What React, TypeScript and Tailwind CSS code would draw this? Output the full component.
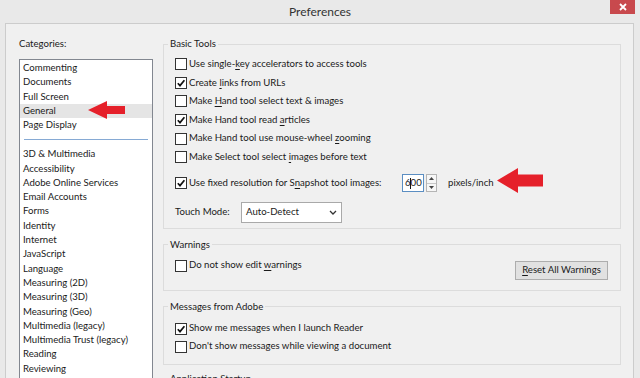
import React from "react";

const Cb = ({ checked }: { checked?: boolean }) => (
  <span className="w-[12px] h-[12px] border border-[#333333] bg-white flex items-center justify-center shrink-0">
    {checked && (
      <svg width="10" height="10" viewBox="0 0 10 10">
        <path d="M1.8 5.2 L4 7.6 L8.4 2.2" fill="none" stroke="#111" strokeWidth="1.7" />
      </svg>
    )}
  </span>
);

const U = ({ children }: { children: React.ReactNode }) => (
  <span className="underline decoration-1 underline-offset-[2px]">{children}</span>
);

const Row = ({ checked, children }: { checked?: boolean; children: React.ReactNode }) => (
  <div className="h-[18.6px] flex items-center gap-[2px]">
    <Cb checked={checked} />
    <span className="whitespace-nowrap">{children}</span>
  </div>
);

const Group = ({ title, className, children }: { title: string; className?: string; children?: React.ReactNode }) => (
  <fieldset className={"border border-[#dcdcdc] w-[458px] " + (className ?? "")}>
    <legend className="ml-[4px] px-[2px] h-[14px] leading-[14px] whitespace-nowrap">{title}</legend>
    {children}
  </fieldset>
);

const cats1 = ["Commenting", "Documents", "Full Screen", "General", "Page Display"];
const cats2 = [
  "3D & Multimedia",
  "Accessibility",
  "Adobe Online Services",
  "Email Accounts",
  "Forms",
  "Identity",
  "Internet",
  "JavaScript",
  "Language",
  "Measuring (2D)",
  "Measuring (3D)",
  "Measuring (Geo)",
  "Multimedia (legacy)",
  "Multimedia Trust (legacy)",
  "Reading",
  "Reviewing",
];

const RedArrow = ({ w, h, headW, tailH, className }: { w: number; h: number; headW: number; tailH: number; className: string }) => {
  const t1 = (h - tailH) / 2;
  const t2 = (h + tailH) / 2;
  return (
    <svg className={className} width={w} height={h} viewBox={`0 0 ${w} ${h}`}>
      <path d={`M0 ${h / 2} L${headW} 0 L${headW} ${t1} L${w} ${t1} L${w} ${t2} L${headW} ${t2} L${headW} ${h} Z`} fill="#e5202a" />
    </svg>
  );
};

export default function App() {
  return (
    <div className="w-[640px] h-[378px] overflow-hidden bg-[#e9e9e9] flex flex-col relative text-[9.6px] text-[#1a1a1a] font-['Lato','Noto_Sans',sans-serif]">
      <div className="h-[23px] shrink-0 flex items-center justify-center relative">
        <span className="text-[12px] text-[#333] leading-none">Preferences</span>
        <div className="absolute right-[5px] top-0 w-[25px] h-[14px] bg-[#c8494d] flex items-center justify-center">
          <svg width="8" height="8" viewBox="0 0 8 8">
            <path d="M1 1 L7 7 M7 1 L1 7" stroke="white" strokeWidth="1.8" />
          </svg>
        </div>
      </div>
      <div className="flex-1 ml-[5px] mr-[6px] border border-b-0 border-[#cccccc] bg-[#f0f0f0] flex min-h-0">
        {/* Left column */}
        <div className="pl-[13px] pt-[13px] flex flex-col w-[147px] shrink-0">
          <div className="h-[14px] leading-[14px]">Categories:</div>
          <div className="mt-[8px] w-[134px] flex-1 bg-white border border-b-0 border-[#828790] pt-[1px]">
            {cats1.map((c) => (
              <div key={c} className={"h-[14.3px] leading-[14.3px] pl-[3px] whitespace-nowrap " + (c === "General" ? "bg-[#e5e5e5]" : "")}>
                {c}
              </div>
            ))}
            <div className="h-[14.8px] flex items-center px-[4px]">
              <div className="h-px w-full bg-[#86aad4]" />
            </div>
            {cats2.map((c) => (
              <div key={c} className="h-[14.3px] leading-[14.3px] pl-[3px] whitespace-nowrap">
                {c}
              </div>
            ))}
          </div>
        </div>
        {/* Right column */}
        <div className="pl-[10px] pt-[13px] flex flex-col">
          <Group title="Basic Tools">
            <div className="pl-[11px] pt-[4px] pb-[5px] flex flex-col">
              <Row>
                Use single-<U>k</U>ey accelerators to access tools
              </Row>
              <Row checked>
                Create <U>l</U>inks from URLs
              </Row>
              <Row>
                Make <U>H</U>and tool select text &amp; images
              </Row>
              <Row checked>
                Make Hand tool read <U>a</U>rticles
              </Row>
              <Row>
                Make Hand tool use mouse-wheel <U>z</U>ooming
              </Row>
              <Row>
                Make Select tool select <U>i</U>mages before text
              </Row>
              <div className="mt-[7px] h-[19px] flex items-center">
                <div className="w-[227px] flex items-center gap-[2px]">
                  <Cb checked />
                  <span className="whitespace-nowrap">
                    Use fixed resolution for S<U>n</U>apshot tool images:
                  </span>
                </div>
                <div className="w-[22px] h-[18px] border border-[#5b8ec2] bg-white flex items-center pl-[2px] leading-none">
                  6<span className="inline-block w-px h-[11px] bg-[#111] mx-[-0.5px]" />00
                </div>
                <div className="ml-[2px] w-[11px] h-[18px] border border-[#b5b5b5] bg-[#f7f7f7] flex flex-col">
                  <div className="flex-1 flex items-center justify-center border-b border-[#c8c8c8]">
                    <svg width="5" height="3" viewBox="0 0 5 3">
                      <path d="M0 3 L2.5 0 L5 3 Z" fill="#444" />
                    </svg>
                  </div>
                  <div className="flex-1 flex items-center justify-center">
                    <svg width="5" height="3" viewBox="0 0 5 3">
                      <path d="M0 0 L2.5 3 L5 0 Z" fill="#444" />
                    </svg>
                  </div>
                </div>
                <span className="ml-[11px]">pixels/inch</span>
              </div>
              <div className="mt-[9px] h-[21px] flex items-center">
                <span className="w-[66px]">Touch Mode:</span>
                <div className="w-[101px] h-[21px] border border-[#a9a9a9] bg-white flex items-center pl-[4px] pr-[4px] justify-between">
                  <span>Auto-Detect</span>
                  <svg width="8" height="5" viewBox="0 0 8 5">
                    <path d="M1 1 L4 4 L7 1" fill="none" stroke="#333" strokeWidth="1.3" />
                  </svg>
                </div>
              </div>
            </div>
          </Group>
          <Group title="Warnings" className="mt-[9px]">
            <div className="pl-[11px] pr-[12px] pt-[5px] pb-[10px] flex items-start justify-between">
              <div className="h-[18px] flex items-center gap-[2px]">
                <Cb />
                <span>
                  Do not show edit <U>w</U>arnings
                </span>
              </div>
              <div className="mt-[4px] w-[93px] h-[19px] border border-[#adadad] bg-[#e1e1e1] flex items-center justify-center">
                <span className="whitespace-nowrap">
                  <U>R</U>eset All Warnings
                </span>
              </div>
            </div>
          </Group>
          <Group title="Messages from Adobe" className="mt-[9px]">
            <div className="pl-[11px] pt-[6px] pb-[8px] flex flex-col">
              <div className="h-[18px] flex items-center gap-[2px]">
                <Cb checked />
                <span>Show me messages when I launch Reader</span>
              </div>
              <div className="h-[18px] flex items-center gap-[2px]">
                <Cb />
                <span>Don't show messages while viewing a document</span>
              </div>
            </div>
          </Group>
          <Group title="Application Startup" className="mt-[7px] h-[40px]" />
        </div>
      </div>
      <RedArrow className="absolute left-[88px] top-[101px]" w={37} h={18} headW={19} tailH={8} />
      <RedArrow className="absolute left-[497px] top-[168px]" w={46} h={25} headW={21} tailH={12} />
    </div>
  );
}
